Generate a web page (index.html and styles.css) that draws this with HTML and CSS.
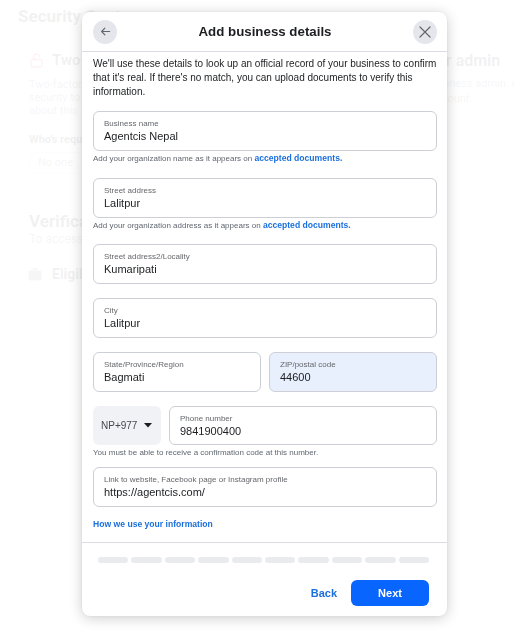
FILE: index.html
```html
<!DOCTYPE html>
<html lang="en">
<head>
<meta charset="utf-8">
<title>Security Center</title>
<link rel="stylesheet" href="styles.css">
</head>
<body>
<main class="page">
  <h1 class="page-title">Security Center</h1>

  <section class="card card-split">
    <div class="col">
      <div class="col-head">
        <svg class="lock" viewBox="0 0 13 15" width="13" height="15" aria-hidden="true">
          <rect x="1" y="6.5" width="11" height="7.5" rx="1.5" fill="none" stroke="#e41e3f" stroke-width="1.3"/>
          <path d="M3.5 6.5V4.2a3 3 0 0 1 6 0" fill="none" stroke="#e41e3f" stroke-width="1.3"/>
        </svg>
        <h2>Two-Factor Authentication</h2>
      </div>
      <p class="col-text">Two-factor authentication adds an extra layer of security to your business portfolio. Learn more about this setting, or go to the help center.</p>
      <h3 class="col-sub">Who's required to use two-factor authentication?</h3>
      <div class="select-box">No one</div>
    </div>
    <div class="col">
      <div class="col-head">
        <h2 class="col-title-lg">Give access to another admin</h2>
      </div>
      <p class="col-text col-text-wide">Pick someone you trust as a business admin. Admins can help<br>you can regain access to the account.</p>
    </div>
  </section>

  <section class="card card-verify">
    <h2 class="card-title">Verification</h2>
    <p class="card-sub">To access certain features, verify your business.</p>
    <div class="eligible">
      <svg viewBox="0 0 14 13" width="14" height="13" aria-hidden="true">
        <path d="M5 2V1h4v1" fill="none" stroke="#606770" stroke-width="1.3"/>
        <rect x="0.5" y="2.5" width="13" height="10" rx="1.5" fill="#606770"/>
      </svg>
      <span>Eligible for verification</span>
    </div>
  </section>
</main>

<div class="overlay">
  <div class="dialog" role="dialog" aria-labelledby="dialog-title">
    <header class="dialog-head">
      <button class="icon-btn" type="button" aria-label="Back">
        <svg viewBox="0 0 12 12" width="11" height="11" aria-hidden="true">
          <path d="M10.5 6H1.8M5.3 2.4 1.8 6l3.5 3.6" fill="none" stroke="#606770" stroke-width="1.3" stroke-linecap="round" stroke-linejoin="round"/>
        </svg>
      </button>
      <h2 id="dialog-title" class="dialog-title">Add business details</h2>
      <button class="icon-btn" type="button" aria-label="Close">
        <svg viewBox="0 0 12 12" width="12" height="12" aria-hidden="true">
          <path d="M1 1l10 10M11 1 1 11" fill="none" stroke="#606770" stroke-width="1.2" stroke-linecap="round"/>
        </svg>
      </button>
    </header>

    <div class="dialog-body">
      <p class="intro">We'll use these details to look up an official record of your business to confirm that it's real. If there's no match, you can upload documents to verify this information.</p>

      <div class="group">
        <div class="field">
          <span class="field-label">Business name</span>
          <span class="field-value">Agentcis Nepal</span>
        </div>
        <p class="hint">Add your organization name as it appears on <a class="link" href="#">accepted documents.</a></p>
      </div>

      <div class="group group-tight">
        <div class="field">
          <span class="field-label">Street address</span>
          <span class="field-value">Lalitpur</span>
        </div>
        <p class="hint">Add your organization address as it appears on <a class="link" href="#">accepted documents.</a></p>
      </div>

      <div class="group">
        <div class="field">
          <span class="field-label">Street address2/Locality</span>
          <span class="field-value">Kumaripati</span>
        </div>
      </div>

      <div class="group">
        <div class="field">
          <span class="field-label">City</span>
          <span class="field-value">Lalitpur</span>
        </div>
      </div>

      <div class="group pair">
        <div class="field">
          <span class="field-label">State/Province/Region</span>
          <span class="field-value">Bagmati</span>
        </div>
        <div class="field field-filled">
          <span class="field-label">ZIP/postal code</span>
          <span class="field-value">44600</span>
        </div>
      </div>

      <div class="group group-phone">
        <div class="phone-row">
          <div class="country">
            <span>NP+977</span>
            <svg viewBox="0 0 8 5" width="8" height="5" aria-hidden="true"><path d="M0 0h8L4 4.5z" fill="#1c1e21"/></svg>
          </div>
          <div class="field phone-field">
            <span class="field-label">Phone number</span>
            <span class="field-value">9841900400</span>
          </div>
        </div>
        <p class="hint">You must be able to receive a confirmation code at this number.</p>
      </div>

      <div class="field">
        <span class="field-label">Link to website, Facebook page or Instagram profile</span>
        <span class="field-value">https://agentcis.com/</span>
      </div>

      <a class="link info-link" href="#">How we use your information</a>
    </div>

    <footer class="dialog-foot">
      <div class="progress">
        <span></span><span></span><span></span><span></span><span></span>
        <span></span><span></span><span></span><span></span><span></span>
      </div>
      <div class="actions">
        <button class="btn-text" type="button">Back</button>
        <button class="btn-primary" type="button">Next</button>
      </div>
    </footer>
  </div>
</div>
</body>
</html>
```

FILE: styles.css
```css
* {
  box-sizing: border-box;
}

html,
body {
  margin: 0;
}

body {
  width: 514px;
  height: 633px;
  overflow: hidden;
  position: relative;
  background: #f0f2f5;
  color: #1c1e21;
  font-family: Roboto, "Liberation Sans", Arial, sans-serif;
}

/* ---------- page behind the dialog ---------- */

.page {
  padding: 6px 9px 0 17px;
}

.page-title {
  margin: 0 0 0 1px;
  font-size: 17px;
  line-height: 20px;
  font-weight: 700;
}

.card {
  background: #fff;
  border-radius: 8px;
}

.card-split {
  margin-top: 14px;
  display: grid;
  grid-template-columns: 234px minmax(0, 1fr);
  column-gap: 25px;
  padding: 10px 12px 17px;
}

.col {
  min-width: 0;
}

.col-head {
  display: flex;
  align-items: center;
  gap: 9px;
  height: 20px;
}

.col-head .lock {
  margin-left: 1px;
}

.col-head h2 {
  margin: 0;
  font-size: 15px;
  font-weight: 700;
  white-space: nowrap;
}

.col-head .col-title-lg {
  font-size: 16px;
}

.col-text {
  margin: 8px 0 0;
  font-size: 11px;
  line-height: 13px;
  color: #606770;
  width: 240px;
}

.col-text-wide {
  width: auto;
  margin-top: 6px;
  line-height: 15px;
  white-space: nowrap;
}

.col-sub {
  margin: 16px 0 0;
  font-size: 11px;
  line-height: 13px;
  font-weight: 700;
  white-space: nowrap;
}

.select-box {
  margin-top: 6px;
  width: 200px;
  height: 22px;
  border: 1px solid #ccd0d5;
  border-radius: 6px;
  padding-left: 8px;
  font-size: 11px;
  line-height: 20px;
  color: #606770;
}

.card-verify {
  margin-top: 10px;
  padding: 10px 12px 20px;
  height: 110px;
}

.card-title {
  margin: 0;
  font-size: 17px;
  line-height: 20px;
  font-weight: 700;
}

.card-sub {
  margin: 0;
  font-size: 12px;
  line-height: 16px;
  color: #606770;
}

.eligible {
  margin-top: 19px;
  margin-left: -1px;
  display: flex;
  align-items: center;
  gap: 10px;
  font-size: 14px;
  font-weight: 700;
}

/* ---------- modal layer ---------- */

.overlay {
  position: fixed;
  inset: 0;
  background: rgba(255, 255, 255, 0.94);
  padding: 12px 0 0 82px;
}

.dialog {
  width: 365px;
  background: #fff;
  border-radius: 8px;
  box-shadow: 0 2px 14px rgba(0, 0, 0, 0.2), 0 0 2px rgba(0, 0, 0, 0.08);
  font-family: "Liberation Sans", Arial, sans-serif;
  color: #1c1e21;
}

.dialog-head {
  height: 40px;
  display: flex;
  align-items: center;
  justify-content: space-between;
  padding: 0 10px 0 11px;
  border-bottom: 1px solid #dadde1;
}

.icon-btn {
  width: 24px;
  height: 24px;
  border: 0;
  border-radius: 50%;
  background: #e4e6eb;
  padding: 0;
  display: flex;
  align-items: center;
  justify-content: center;
  cursor: pointer;
}

.dialog-title {
  margin: 0;
  font-size: 13.3px;
  font-weight: 700;
  line-height: 16px;
}

.dialog-body {
  padding: 5px 10px 12px 11px;
}

.intro {
  margin: 0 -4px 12px 0;
  font-size: 10px;
  line-height: 14px;
}

.group {
  margin-bottom: 14px;
}

.group-tight {
  margin-bottom: 13px;
}

.field {
  height: 40px;
  border: 1px solid #ccd0d5;
  border-radius: 6px;
  padding: 0 10px;
  display: flex;
  flex-direction: column;
  justify-content: center;
  background: #fff;
}

.field-label {
  font-size: 8px;
  line-height: 10px;
  color: #65676b;
  white-space: nowrap;
}

.field-value {
  font-size: 11px;
  line-height: 14px;
  color: #1c1e21;
}

.field-filled {
  background: #e8f0fe;
}

.hint {
  margin: 1px 0 0;
  height: 12px;
  font-size: 8px;
  line-height: 12px;
  color: #606770;
  white-space: nowrap;
}

.link {
  color: #1b6fdc;
  font-weight: 700;
  font-size: 8.6px;
  line-height: 12px;
  text-decoration: none;
}

.pair {
  display: grid;
  grid-template-columns: 1fr 1fr;
  column-gap: 8px;
}

.group-phone {
  margin-bottom: 8px;
}

.group-phone .hint {
  margin-top: 2px;
}

.phone-row {
  display: flex;
  gap: 8px;
}

.country {
  width: 68px;
  height: 39px;
  flex: none;
  background: #f0f2f5;
  border-radius: 6px;
  display: flex;
  align-items: center;
  gap: 7px;
  padding-left: 8px;
  font-size: 10px;
  color: #444950;
}

.phone-field {
  flex: 1;
  height: 39px;
}

.info-link {
  display: block;
  margin-top: 11px;
}

.dialog-foot {
  border-top: 1px solid #dadde1;
  padding: 14px 18px 10px 16px;
}

.progress {
  display: flex;
  gap: 3px;
  height: 6px;
}

.progress span {
  flex: 1;
  background: #e9ebee;
  border-radius: 3px;
}

.actions {
  margin-top: 17px;
  display: flex;
  justify-content: flex-end;
  align-items: center;
  gap: 14px;
}

.btn-text,
.btn-primary {
  font-family: "Liberation Sans", Arial, sans-serif;
  font-size: 11px;
  font-weight: 700;
  border: 0;
  cursor: pointer;
}

.btn-text {
  background: none;
  padding: 0;
  color: #1b6fdc;
}

.btn-primary {
  width: 78px;
  height: 26px;
  border-radius: 6px;
  background: #0866ff;
  color: #fff;
}
```
